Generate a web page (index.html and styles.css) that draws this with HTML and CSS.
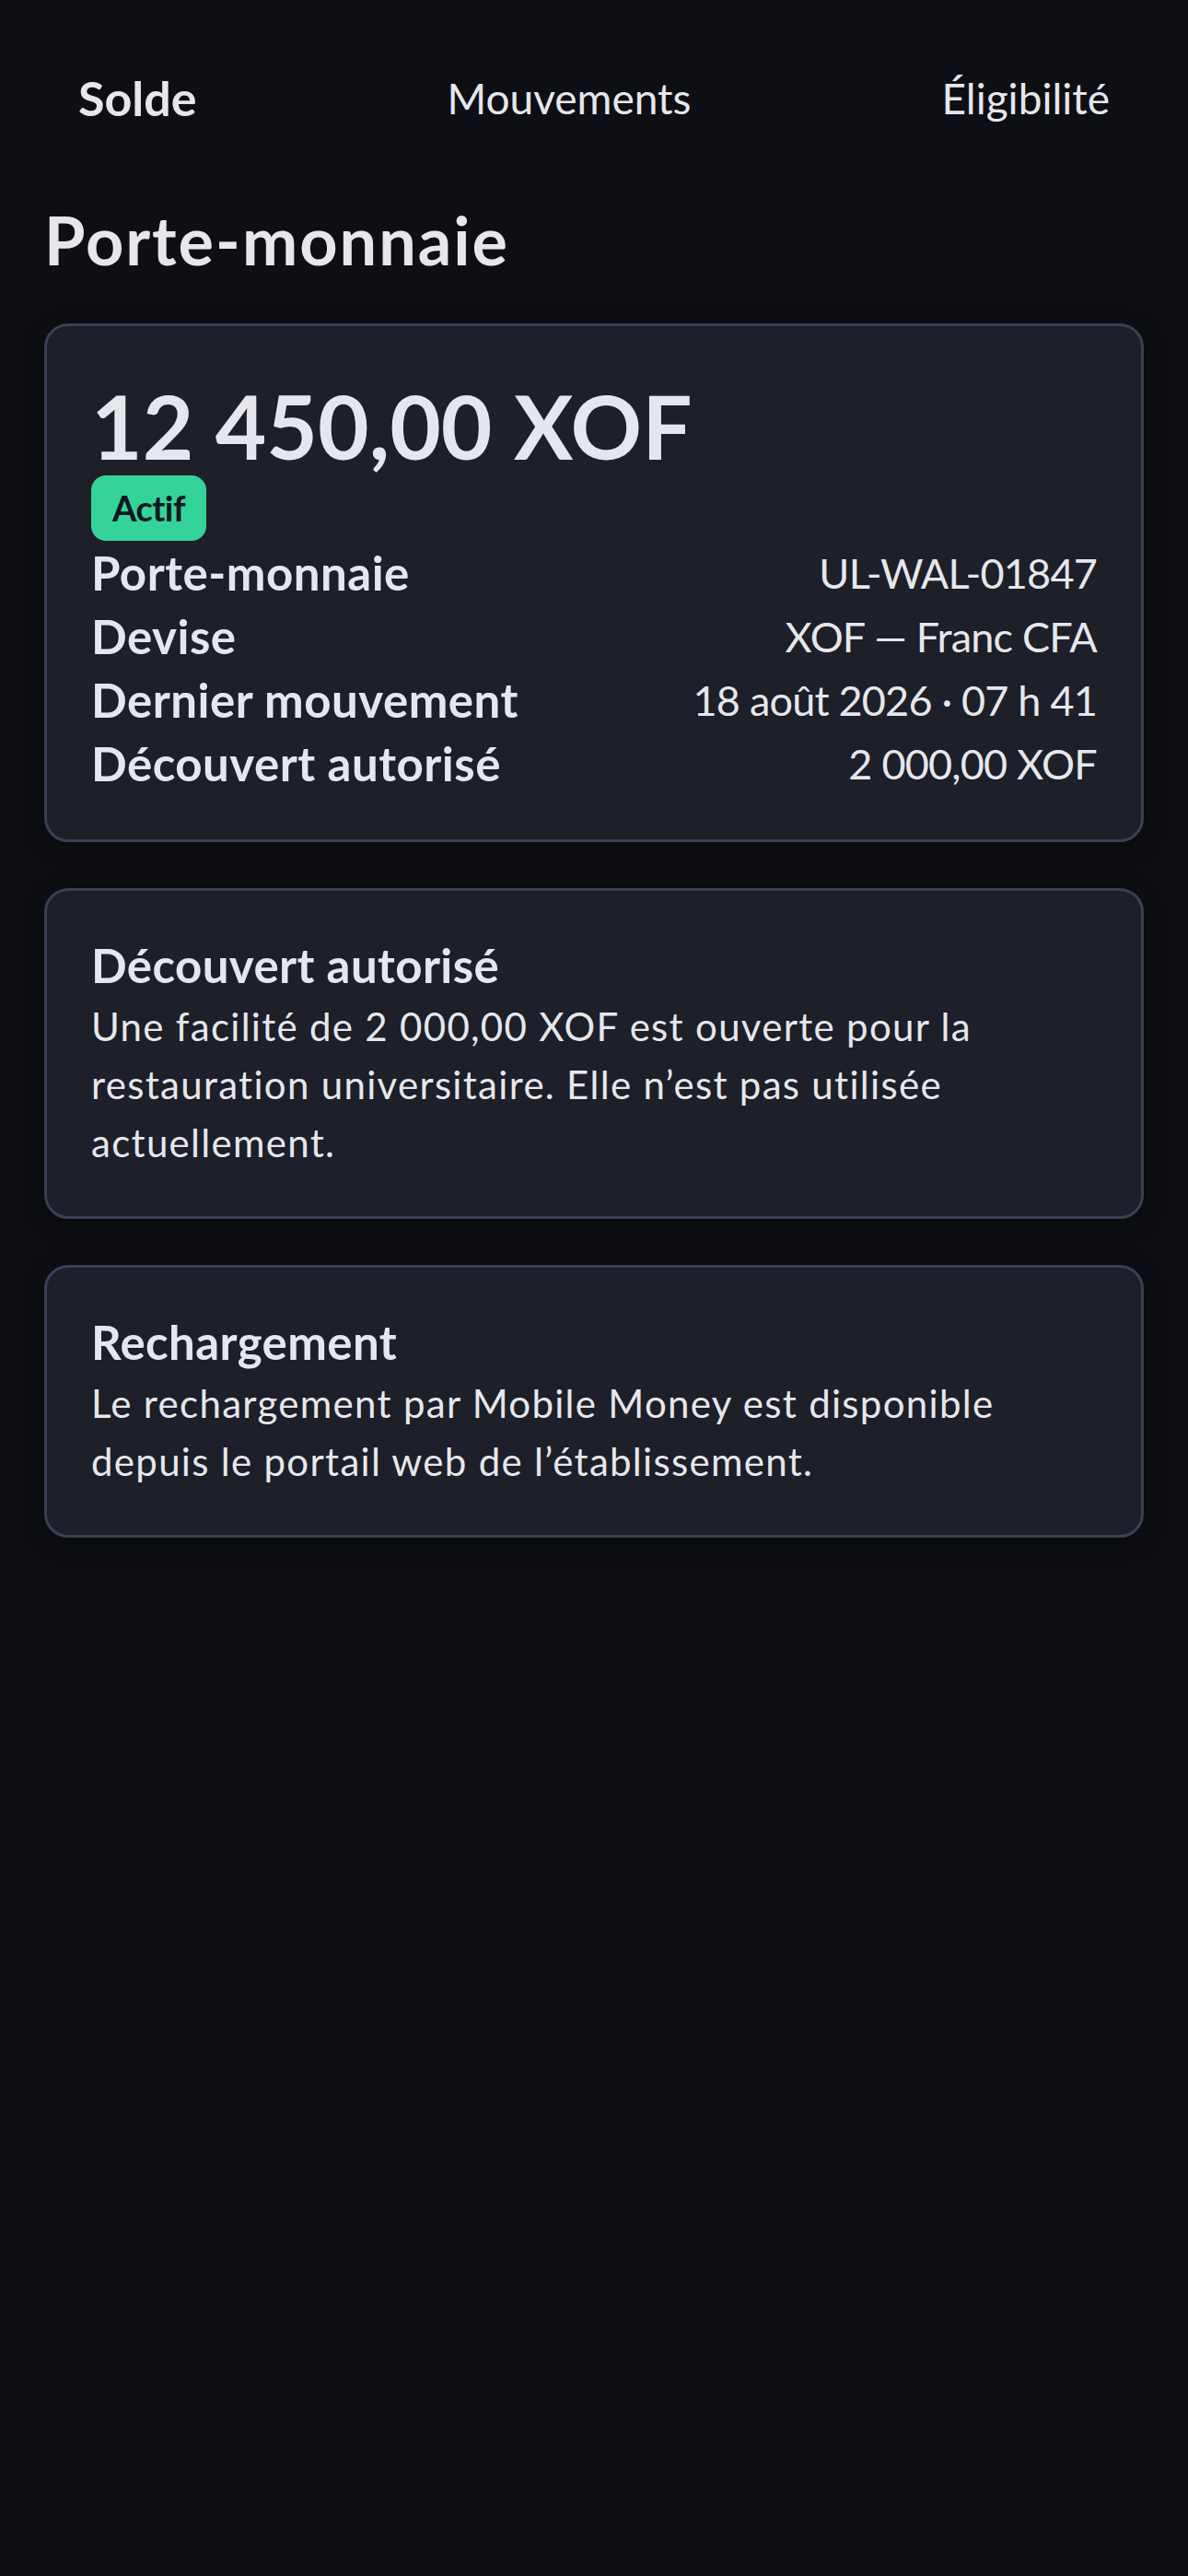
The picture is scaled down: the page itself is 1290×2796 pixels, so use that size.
FILE: index.html
```html
<!DOCTYPE html>
<html lang="fr">
<head>
<meta charset="utf-8">
<title>Porte-monnaie</title>
<link rel="stylesheet" href="styles.css">
</head>
<body>
<div class="page">
  <nav class="tabs">
    <a class="tab tab-active">Solde</a>
    <a class="tab">Mouvements</a>
    <a class="tab">Éligibilité</a>
  </nav>

  <h1 class="title">Porte-monnaie</h1>

  <section class="card wallet">
    <div class="balance">12 450,00 XOF</div>
    <span class="badge">Actif</span>
    <dl class="rows">
      <div class="row"><dt>Porte-monnaie</dt><dd>UL-WAL-01847</dd></div>
      <div class="row"><dt>Devise</dt><dd>XOF — Franc CFA</dd></div>
      <div class="row"><dt>Dernier mouvement</dt><dd>18 août 2026 · 07 h 41</dd></div>
      <div class="row"><dt>Découvert autorisé</dt><dd>2 000,00 XOF</dd></div>
    </dl>
  </section>

  <section class="card info">
    <h2 class="card-title">Découvert autorisé</h2>
    <p class="card-text">Une facilité de 2 000,00 XOF est ouverte pour la restauration universitaire. Elle n’est pas utilisée actuellement.</p>
  </section>

  <section class="card info">
    <h2 class="card-title">Rechargement</h2>
    <p class="card-text">Le rechargement par Mobile Money est disponible depuis le portail web de l’établissement.</p>
  </section>
</div>
</body>
</html>
```

FILE: styles.css
```css
html, body {
  margin: 0;
  padding: 0;
  background: #0e0f14;
}

body {
  font-family: Lato, "Noto Sans", sans-serif;
  font-variant-ligatures: none;
  color: #e6e7ec;
  min-height: 2796px;
}

.page {
  padding: 46px 48px 48px;
}

.tabs {
  display: flex;
  justify-content: space-between;
  align-items: center;
  height: 120px;
}

.tab {
  padding: 0 37px;
  font-size: 46px;
  font-weight: 400;
  color: #e6e7ec;
  text-decoration: none;
}

.tab-active {
  font-size: 52px;
  font-weight: 700;
}

.title {
  margin: 51px 0 48px;
  font-size: 72px;
  line-height: 86px;
  font-weight: 700;
  letter-spacing: 2px;
}

.card {
  background: #1d1f29;
  border: 3px solid #3a4155;
  border-radius: 26px;
  padding: 48px;
  box-shadow: 0 6px 24px rgba(0, 0, 0, 0.35);
  margin-bottom: 50px;
}

.balance {
  margin-top: 12px;
  font-size: 96px;
  line-height: 96px;
  font-weight: 700;
  letter-spacing: 0;
}

.badge {
  display: inline-block;
  margin-top: 6px;
  height: 71px;
  line-height: 71px;
  padding: 0 23px;
  border-radius: 16px;
  background: #34d399;
  color: #0f1720;
  font-size: 38px;
  font-weight: 700;
  letter-spacing: -0.5px;
}

.rows {
  margin: 0;
}

.row {
  display: flex;
  justify-content: space-between;
  align-items: center;
  height: 69px;
}

.row dt {
  font-size: 51px;
  font-weight: 700;
  letter-spacing: 0.5px;
}

.row dd {
  margin: 0;
  font-size: 45px;
  font-weight: 400;
  letter-spacing: -0.8px;
  text-align: right;
}

.card-title {
  margin: 0 0 2px;
  font-size: 51px;
  line-height: 66px;
  font-weight: 700;
  letter-spacing: 0.4px;
}

.card-text {
  margin: 0;
  font-size: 42px;
  line-height: 63px;
  font-weight: 400;
  letter-spacing: 1.3px;
}
```
